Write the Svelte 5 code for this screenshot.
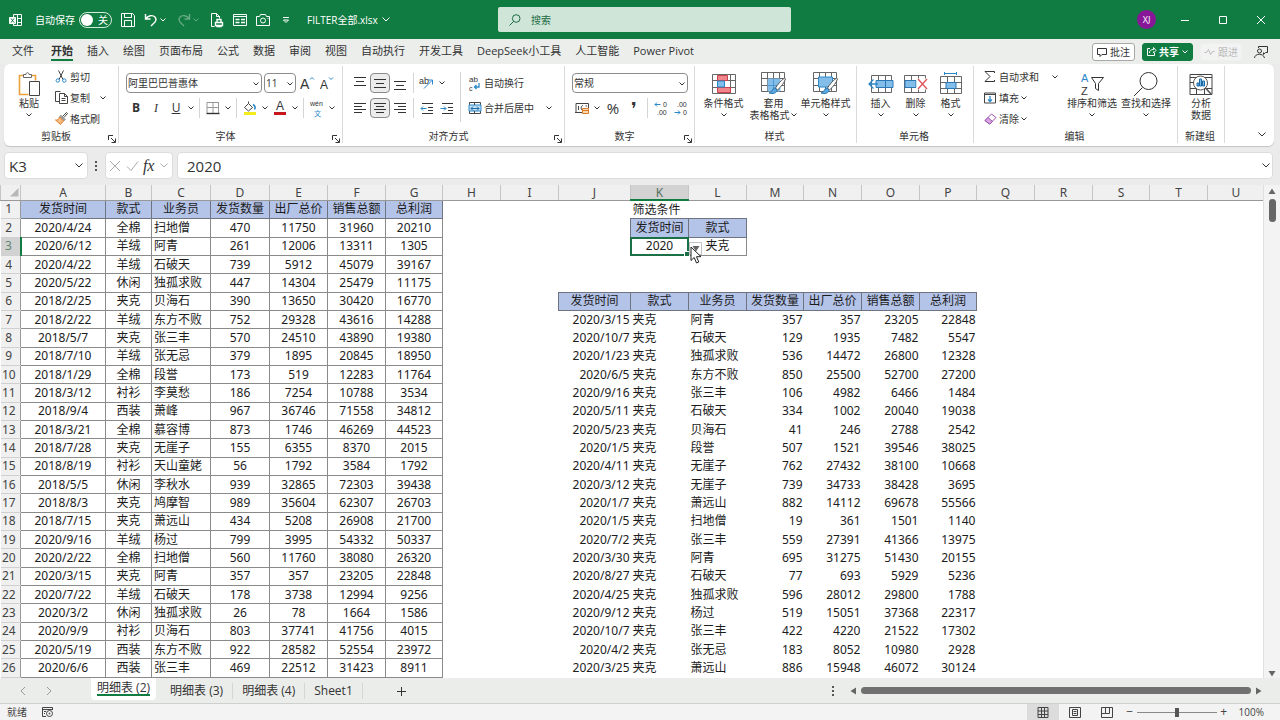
<script lang="ts">
    // part: [path, stroke?, fill?, stroke width?]   text: [x, y, size, string, colour?]
    type Part = [string, string?, string?, number?];
    type Glyph = [number, number, number, string, string?];
    type Icon = { w: number; h: number; p?: Part[]; t?: Glyph[] };

    const BLUE = "#2b88c8";
    const SKY = "#83bdea";
    const INK = "#444";
    const GRID = "M.5 .5h23v19H.5zM.5 6.5h23M.5 13.5h23M6.5 .5v19M12.5 .5v19M18.5 .5v19";

    const icons: Record<string, Icon> = {
        excel: {
            w: 14,
            h: 14,
            p: [
                ["M4.5 4V1.5h8v11h-8V11M8 5.5h4.500M8.5 1.5v11M8 9.500h4.500"],
                ["M.5 4.5h6v6h-6z", "#fff", "#fff"],
                ["M2 5.5l3 4M5 5.5l-3 4", "#107c41"],
            ],
        },
        save: { w: 14, h: 14, p: [["M.5 .5h11l2 2v11H.5zM3.5 .5v4h7v-4M3.5 13.5v-6h7v6"]] },
        undo: { w: 14, h: 14, p: [["M1.5 1v5h5M1.5 6C4 2.500 8.500 1.500 11 4c2 2.500.5 5-1.500 6.500L7 13", "currentColor", "none", 1.4]] },
        redo: { w: 14, h: 14, p: [["M12.500 1v5h-5M12.500 6C10 2.500 5.500 1.500 3 4 1 6.500 2.500 9 4.500 10.500L7 13", "currentColor", "none", 1.4]] },
        print: {
            w: 14,
            h: 14,
            p: [["M4.500 13.500h-3v-13h5l3 3v2M6.500 .5v3h3"], ["M5.500 9.500h7v3h-7zM7 9.500v-3h4v3M7 12.500v1h4v-1", "currentColor", "none", 1.4]],
        },
        form: { w: 14, h: 12, p: [["M.5 .5h13v11H.5zM.5 2.500h13", "currentColor"], ["M2.500 5.500h4M2.500 8.500h4M8 5.500h4M8 8.500h4", "currentColor", "none", 1.6]] },
        camera: { w: 14, h: 12, p: [["M.5 2.500h3l1-2h5l1 2h3v9H.5zM9.500 6.500a2.500 2.500 0 1 1-5 0a2.500 2.500 0 0 1 5 0M11.500 4.500h1"]] },
        more: { w: 8, h: 8, p: [["M1 1.500h6"], ["M1.500 4h5L4 6.500z"]] },
        chev: { w: 8, h: 6, p: [["M1.500 1.500L4 4l2.500-2.500"]] },
        chevBig: { w: 10, h: 7, p: [["M1.500 1.500L5 5l3.500-3.500"]] },
        search: { w: 12, h: 12, p: [["M11 4.500a3.800 3.800 0 1 1-7.600 0a3.800 3.800 0 0 1 7.600 0M4.500 7.500L.5 11.500"]] },
        min: { w: 10, h: 10, p: [["M1 5.500h8"]] },
        max: { w: 10, h: 10, p: [["M1.500 1.500h7v7h-7z"]] },
        close: { w: 10, h: 10, p: [["M1 1l8 8M9 1L1 9"]] },
        comment: { w: 10, h: 10, p: [["M.5 1.500h9v6H5l-2 2v-2H.5z"]] },
        share: { w: 11, h: 11, p: [["M4 2.500H1.500v7h7V7M3.500 7c0-2.500 1.500-3.500 4-3.500V1.500l2.500 3-2.500 2.500V5.500"]] },
        pulse: { w: 11, h: 8, p: [["M.5 4.500h2l2-3 2 5 2-3h2"]] },
        person: { w: 14, h: 14, p: [["M7.500 6a2 2 0 1 1-4 0a2 2 0 0 1 4 0M.5 13c.5-5 9-5 10 0M4.500 3V1.500h9v6h-2l-2 2v-2"]] },

        paste: {
            w: 24,
            h: 25,
            p: [
                ["M6 3.500H2.500v19h9M15 3.500h3.500v5", "#e9a13b", "none", 1.6],
                ["M6.500 5.500v-3h2.500c0-2.500 3-2.500 3 0h2.500v3z", "#666", "#fff"],
                ["M12.500 9.500h10v14h-10z", "#444", "#fff"],
            ],
        },
        cut: {
            w: 12,
            h: 13,
            p: [["M3.500 .5l4.500 9M8.500 .5l-4.500 9", INK], ["M4.500 10.500a1.700 1.700 0 1 1-3.400 0a1.700 1.700 0 0 1 3.400 0M11 10.500a1.700 1.700 0 1 1-3.400 0a1.700 1.700 0 0 1 3.400 0", BLUE]],
        },
        copy: { w: 13, h: 13, p: [["M5 10.500H.5v-10h5", INK], ["M4.500 2.500h5l3 3v7h-8zM9.500 2.500v3h3M6.500 7.500h4M6.500 9.500h4", INK, "#fff"]] },
        brush: {
            w: 13,
            h: 13,
            p: [["M7.500 4.500L11.500 .5l1 1-3.500 4", INK, "#fff"], ["M6 3.500l4 4-1 1-4-4z", INK, "#fff"], ["M4.500 5l4 4-3 3.500L.5 8c2 .5 3-.5 4-3z", "#e07b28", "#f6bd82"]],
        },
        launcher: { w: 8, h: 8, p: [["M.5 5V.5H5M3 3l4 4M7.500 3.500v4h-4"]] },
        growFont: { w: 16, h: 14, p: [["M10 3.500l2-2 2 2", BLUE]], t: [[0, 13, 14, "A"]] },
        shrinkFont: { w: 16, h: 14, p: [["M9 1.500l2 2 2-2", BLUE]], t: [[0, 13, 12, "A"]] },
        borders: { w: 14, h: 14, p: [["M1 1.500h12M1 1v11M12.500 1v11M7 2v10M1 6.500h12", "#999"], ["M.5 12.500h13", "#333", "none", 1.4]] },
        fill: {
            w: 14,
            h: 14,
            p: [["M1.500 6.500l4-4 4 4-4 3.500zM5.500 2.500V.5", INK, "#fff"], ["M10 3.500c2 1 2.500 3 1.500 5", BLUE, "none", 1.6], ["M1 12.500h12", "#f3ec1c", "none", 3]],
        },
        fontColor: { w: 14, h: 14, p: [["M1 12.500h12", "#c5161d", "none", 3]], t: [[3, 9, 12, "A"]] },
        phonetic: { w: 16, h: 15, t: [[1, 5, 7, "wén"], [5, 15, 7, "文", BLUE]] },
        top: { w: 14, h: 14, p: [["M1 1.500h12M3 5.500h8M1 9.500h12"]] },
        middle: { w: 14, h: 14, p: [["M1 3.500h12M3 7.500h8M1 11.500h12"]] },
        bottom: { w: 14, h: 14, p: [["M1 5.500h12M3 9.500h8M1 13.500h12"]] },
        left: { w: 14, h: 14, p: [["M1 2.500h12M1 5.500h8M1 8.500h12M1 11.500h8"]] },
        center: { w: 14, h: 14, p: [["M1 2.500h12M3 5.500h8M1 8.500h12M3 11.500h8"]] },
        right: { w: 14, h: 14, p: [["M1 2.500h12M5 5.500h8M1 8.500h12M5 11.500h8"]] },
        orient: { w: 16, h: 14, p: [["M5 12.500l8-8M9 4h4.500v4.500", BLUE]], t: [[0, 8, 9, "ab"]] },
        outdent: { w: 14, h: 14, p: [["M2 2.500h11M8 6.500h5M8 9.500h5M2 12.500h11"], ["M6.500 7.500H1M3 5.500l-2 2 2 2", BLUE]] },
        indent: { w: 14, h: 14, p: [["M2 2.500h11M8 6.500h5M8 9.500h5M2 12.500h11"], ["M.5 7.500H6M4 5.500l2 2-2 2", BLUE]] },
        wrap: { w: 14, h: 15, p: [["M11 7v4H6.500M8.500 9l-2 2 2 2", BLUE, "none", 1.3]], t: [[1, 6, 8, "ab"], [1, 15, 7, "c"]] },
        merge: { w: 14, h: 14, p: [["M1.500 1.500h11v11h-11z", INK, "#fff"], ["M1 4h12v6H1z", BLUE, "#c6e0f5"], ["M3 7.500h8M5 5.500l-2 2 2 2M9 5.500l2 2-2 2", "#1c6aa5"], ["M6.500 1v3M6.500 10v3", INK]] },
        money: {
            w: 15,
            h: 13,
            p: [["M1 10.500V1.500h12.500V6M3.500 4v4M8 3.500c-2.500 0-2.500 5 0 5M12 4h-1.500", INK], ["M7.500 6.500h6v5h-6zM7.500 8.500h6", "#e07b28", "#f8d9b5"], ["M0 10.500h7", INK]],
        },
        incDec: { w: 14, h: 14, p: [["M6.500 3.500H1M3 1.500l-2 2 2 2", BLUE]], t: [[9, 6, 7, "0"], [3, 14, 7, ".00"]] },
        decDec: { w: 14, h: 14, p: [["M.5 11.500H6M4 9.500l2 2-2 2", BLUE]], t: [[3, 6, 7, ".00"], [9, 14, 7, "0"]] },
        cond: {
            w: 24,
            h: 20,
            p: [[GRID, "#666", "#fff"], ["M5.500 1.500h10v5h-10zM5.500 13.500h13v5h-13z", "#c8414b", "#f0858b"], ["M5.500 7h7v6h-7z", BLUE, SKY]],
        },
        tableStyle: {
            w: 25,
            h: 24,
            p: [[GRID, "#666", "#fff"], ["M7 7h12v12H7z", SKY, SKY], ["M12.500 7v12M7 13.500h12", "#4f97cf"], ["M23.500 6c-4 3-7 6.500-9 10l2 2c4-3.500 6.500-7 8-11z", "#555", "#fff"], ["M14 16c-3 0-2 4-6 5 4 1.500 8 0 8-3z", "#2b78b5", "#5aa5dd"]],
        },
        cellStyle: {
            w: 25,
            h: 24,
            p: [[GRID, "#666", "#fff"], ["M5.500 5h14v10h-14z", BLUE, SKY], ["M23.500 6c-4 3-7 6.500-9 10l2 2c4-3.500 6.500-7 8-11z", "#555", "#fff"], ["M14 16c-3 0-2 4-6 5 4 1.500 8 0 8-3z", "#2b78b5", "#5aa5dd"]],
        },
        insert: {
            w: 26,
            h: 20,
            p: [["M3.500 1.500h20v17h-20zM10.500 1v18M17.500 1v18", "#666", "#fff"], ["M8 6.500h17v7H8z", "#2b78b5", SKY], ["M17.500 6v8", "#2b78b5"], ["M10 10H1.500M5.500 5.500L1 10l4.500 4.500", BLUE, "none", 1.3]],
        },
        remove: {
            w: 25,
            h: 20,
            p: [["M1.500 1.500h21v17h-21zM8.500 1v18M15.500 1v18", "#666", "#fff"], ["M2 6.500h11v7H2z", "#2b78b5", SKY], ["M14 5h9v10h-9z", "#fff", "#fff"], ["M15 5l9 10M24 5l-9 10", "#e2525b", "none", 1.3]],
        },
        format: {
            w: 24,
            h: 24,
            p: [["M1.500 4.500h21v17h-21zM8.500 4v18M15.500 4v18M1.500 10.500h21M1.500 16.500h21", "#666", "#fff"], ["M7 10.500h10v6H7z", "#2b78b5", SKY], ["M5.500 1.500h12M5.500 0v3M17.500 0v3", BLUE]],
        },
        sum: { w: 12, h: 13, p: [["M10.500 3V1.500H1L6 6.500l-5 5h9.500V10"]] },
        fillDown: { w: 14, h: 12, p: [["M1.500 1h11v10h-11zM1.500 2.500h11", INK], ["M7 4v5M5 7.500l2 2 2-2", BLUE, "none", 1.3]] },
        eraser: { w: 13, h: 12, p: [["M1 7.500L7.500 1 12 4.500 5.500 11z", "#9a4fa8", "#fff"], ["M1 7.500L4 4.500l4.500 4-3 2.500z", "#9a4fa8", "#d9a8e2"]] },
        sort: { w: 25, h: 25, p: [["M11.500 5.500h12l-5 6v7l-3-2v-5z"]], t: [[1, 10, 11, "A", BLUE], [1, 23, 11, "Z"]] },
        find: { w: 26, h: 25, p: [["M24 9a8.500 8.500 0 1 1-17 0a8.500 8.500 0 0 1 17 0M9.500 15.500L1 24"]] },
        analyze: {
            w: 24,
            h: 25,
            p: [["M1 2.500h22v20H1zM1 5.500h22M1 16.500h22M7.500 16v6M15.500 16v6M1 10.500h5", INK, "#fff"], ["M18.500 11a7 7 0 1 1-14 0a7 7 0 0 1 14 0", "#555", "#fff"], ["M16.500 16l6 6.500", "#555", "none", 1.6], ["M8 14v-3h2v3zM10.500 14V7h2v7zM13.500 14V9h2v5z", "#1c6aa5", SKY]],
        },

        cross: { w: 12, h: 12, p: [["M1 1l10 10M11 1L1 11"]] },
        check: { w: 13, h: 12, p: [["M1 6.500l4 4 7-9"]] },
        corner: { w: 10, h: 9, p: [["M9.500 0v8.500H1z", "none", "#b8b8b8"]] },
        up: { w: 8, h: 7, p: [["M4 .5L7.500 6h-7z", "none", "#666"]] },
        down: { w: 8, h: 7, p: [["M4 6.500L7.500 1h-7z", "none", "#666"]] },
        prev: { w: 7, h: 8, p: [["M.5 4L6 .5v7z", "none", "#666"]] },
        next: { w: 7, h: 8, p: [["M6.500 4L1 .5v7z", "none", "#666"]] },
        navPrev: { w: 6, h: 10, p: [["M5 1L1 5l4 4"]] },
        navNext: { w: 6, h: 10, p: [["M1 1l4 4-4 4"]] },
        plus: { w: 10, h: 10, p: [["M5.500 1v9M1 5.500h9"]] },
        macro: { w: 13, h: 12, p: [["M5 10.500H1.500v-9h10V4M1.500 3.500h10M3 5.500h2M3 7.500h1"], ["M11.500 7.500a3 3 0 1 1-6 0a3 3 0 0 1 6 0M9 7.500a.5.5 0 1 1-1 0a.5.5 0 0 1 1 0"]] },
        viewNormal: { w: 12, h: 11, p: [["M1 .5h10v10H1zM1 4h10M1 7.500h10M4.500 .5v10M7.500 .5v10"]] },
        viewPage: { w: 12, h: 11, p: [["M.5 .5h11v10H.5zM3.500 2.500h5v6h-5zM4.500 4.500h3M4.500 6.500h3"]] },
        viewBreak: { w: 12, h: 11, p: [["M.5 .5h11v10H.5zM4.500 .5v6h-4M8.500 .5v6h-4"]] },
        pointer: { w: 12, h: 19, p: [["M1 1v13.500l3.200-3 2.300 5.500 2.300-1-2.300-5.300H11z", "#222", "#fff"]] },
    };

    const menus = ["文件", "开始", "插入", "绘图", "页面布局", "公式", "数据", "审阅", "视图", "自动执行", "开发工具", "DeepSeek小工具", "人工智能", "Power Pivot"];
    const columns = "ABCDEFGHIJKLMNOPQRSTU".split("");
    const headings = ["发货时间", "款式", "业务员", "发货数量", "出厂总价", "销售总额", "总利润"];

    const source = `2020/4/24 全棉 扫地僧 470 11750 31960 20210
2020/6/12 羊绒 阿青 261 12006 13311 1305
2020/4/22 羊绒 石破天 739 5912 45079 39167
2020/5/22 休闲 独孤求败 447 14304 25479 11175
2018/2/25 夹克 贝海石 390 13650 30420 16770
2018/2/22 羊绒 东方不败 752 29328 43616 14288
2018/5/7 夹克 张三丰 570 24510 43890 19380
2018/7/10 羊绒 张无忌 379 1895 20845 18950
2018/1/29 全棉 段誉 173 519 12283 11764
2018/3/12 衬衫 李莫愁 186 7254 10788 3534
2018/9/4 西装 萧峰 967 36746 71558 34812
2018/3/21 全棉 慕容博 873 1746 46269 44523
2018/7/28 夹克 无崖子 155 6355 8370 2015
2018/8/19 衬衫 天山童姥 56 1792 3584 1792
2018/5/5 休闲 李秋水 939 32865 72303 39438
2018/8/3 夹克 鸠摩智 989 35604 62307 26703
2018/7/15 夹克 萧远山 434 5208 26908 21700
2020/9/16 羊绒 杨过 799 3995 54332 50337
2020/2/22 全棉 扫地僧 560 11760 38080 26320
2020/3/15 夹克 阿青 357 357 23205 22848
2020/7/22 羊绒 石破天 178 3738 12994 9256
2020/3/2 休闲 独孤求败 26 78 1664 1586
2020/9/9 衬衫 贝海石 803 37741 41756 4015
2020/5/19 西装 东方不败 922 28582 52554 23972
2020/6/6 西装 张三丰 469 22512 31423 8911`.split("\n").map((line) => line.split(" "));

    const result = `2020/3/15 夹克 阿青 357 357 23205 22848
2020/10/7 夹克 石破天 129 1935 7482 5547
2020/1/23 夹克 独孤求败 536 14472 26800 12328
2020/6/5 夹克 东方不败 850 25500 52700 27200
2020/9/16 夹克 张三丰 106 4982 6466 1484
2020/5/11 夹克 石破天 334 1002 20040 19038
2020/5/23 夹克 贝海石 41 246 2788 2542
2020/1/5 夹克 段誉 507 1521 39546 38025
2020/4/11 夹克 无崖子 762 27432 38100 10668
2020/3/12 夹克 无崖子 739 34733 38428 3695
2020/1/7 夹克 萧远山 882 14112 69678 55566
2020/1/5 夹克 扫地僧 19 361 1501 1140
2020/7/2 夹克 张三丰 559 27391 41366 13975
2020/3/30 夹克 阿青 695 31275 51430 20155
2020/8/27 夹克 石破天 77 693 5929 5236
2020/4/25 夹克 独孤求败 596 28012 29800 1788
2020/9/12 夹克 杨过 519 15051 37368 22317
2020/10/7 夹克 张三丰 422 4220 21522 17302
2020/4/2 夹克 张无忌 183 8052 10980 2928
2020/3/25 夹克 萧远山 886 15948 46072 30124`.split("\n").map((line) => line.split(" "));

    type Cell = { v: string; c: string };

    function cellAt(row: number, col: number): Cell {
        if (col < 7) {
            if (row === 1) return { v: headings[col], c: "head" };
            return { v: source[row - 2][col], c: col === 2 ? "box start" : "box" };
        }
        if (col === 10 && row === 1) return { v: "筛选条件", c: "start" };
        if ((col === 10 || col === 11) && row === 2) return { v: headings[col - 10], c: "head" };
        if (col === 10 && row === 3) return { v: "2020", c: "box active" };
        if (col === 11 && row === 3) return { v: "夹克", c: "box" };
        if (col >= 9 && col <= 15) {
            if (row === 6) return { v: headings[col - 9], c: "head" };
            if (row > 6) return { v: result[row - 7][col - 9], c: col === 10 || col === 11 ? "start" : "end" };
        }
        return { v: "", c: "" };
    }

    const rows = Array.from({ length: 26 }, (_, r) => columns.map((_, c) => cellAt(r + 1, c)));

    let menu = $state("开始");
    let sheet = $state("明细表 (2)");
    let autosave = $state(false);
    let zoom = $state(100);
    let formula = $state("2020");
    let cellName = $state("K3");
</script>

{#snippet icon(name: string)}
    {@const i = icons[name]}
    <svg width={i.w} height={i.h} viewBox="0 0 {i.w} {i.h}" aria-hidden="true">
        {#each i.p ?? [] as [d, stroke, fill, width]}
            <path {d} stroke={stroke ?? "currentColor"} fill={fill ?? "none"} stroke-width={width ?? 1} />
        {/each}
        {#each i.t ?? [] as [x, y, size, text, color]}
            <text {x} {y} font-size={size} fill={color ?? "currentColor"}>{text}</text>
        {/each}
    </svg>
{/snippet}

{#snippet tool(name: string, label: string, on = false)}
    <button class="tool" class:on aria-label={label}>{@render icon(name)}</button>
{/snippet}

{#snippet drop(label: string)}
    <button class="drop" aria-label={label}>{@render icon("chev")}</button>
{/snippet}

{#snippet line(name: string, label: string)}
    <button class="line"><span class="pic">{@render icon(name)}</span>{label}</button>
{/snippet}

{#snippet big(name: string, first: string, second = "", arrow = true)}
    <button class="big">
        <span class="art">{@render icon(name)}</span>
        <span>{first}</span>
        <span class="second">{second}{#if arrow}{@render icon("chev")}{/if}</span>
    </button>
{/snippet}

{#snippet caption(label: string, launcher = true)}
    <div class="caption">
        <span>{label}</span>
        {#if launcher}<button aria-label="{label}设置">{@render icon("launcher")}</button>{/if}
    </div>
{/snippet}

<div class="window">
    <header class="title">
        <div class="quick">
            <span class="logo">{@render icon("excel")}</span>
            <label for="autosave">自动保存</label>
            <span class="switch">
                <input id="autosave" type="checkbox" role="switch" bind:checked={autosave} />
                <span>{autosave ? "开" : "关"}</span>
            </span>
            <button aria-label="保存">{@render icon("save")}</button>
            <span class="pair">
                <button aria-label="撤消">{@render icon("undo")}</button>
                {@render drop("撤消列表")}
            </span>
            <span class="pair dim">
                <button aria-label="恢复" disabled>{@render icon("redo")}</button>
                {@render drop("恢复列表")}
            </span>
            <button aria-label="打印预览">{@render icon("print")}</button>
            <button aria-label="记录单">{@render icon("form")}</button>
            <button aria-label="照相机">{@render icon("camera")}</button>
            <button class="more" aria-label="自定义快速访问工具栏">{@render icon("more")}</button>
            <button class="file">FILTER全部.xlsx {@render icon("chevBig")}</button>
        </div>
        <label class="search">
            {@render icon("search")}
            <input type="search" placeholder="搜索" aria-label="搜索" />
        </label>
        <div class="controls">
            <button class="avatar">XJ</button>
            <button aria-label="最小化">{@render icon("min")}</button>
            <button aria-label="最大化">{@render icon("max")}</button>
            <button aria-label="关闭">{@render icon("close")}</button>
        </div>
    </header>

    <nav class="menus">
        {#each menus as m}
            <button class="menu" class:current={menu === m} onclick={() => (menu = m)}><span>{m}</span></button>
        {/each}
        <div class="actions">
            <button class="pill">{@render icon("comment")}批注</button>
            <button class="pill share">{@render icon("share")}共享{@render icon("chev")}</button>
            <button class="pill off" disabled>{@render icon("pulse")}跟进</button>
            <button class="people" aria-label="联系人">{@render icon("person")}</button>
        </div>
    </nav>

    <section class="ribbon">
        <div class="group clipboard">
            <div class="body">
                {@render big("paste", "粘贴")}
                <div class="stack">
                    {@render line("cut", "剪切")}
                    <div class="pair">{@render line("copy", "复制")}{@render drop("复制选项")}</div>
                    {@render line("brush", "格式刷")}
                </div>
            </div>
            {@render caption("剪贴板")}
        </div>

        <div class="group font">
            <div class="body lines">
                <div class="row">
                    <span class="select family">
                        <select aria-label="字体"><option>阿里巴巴普惠体</option></select>
                        {@render icon("chev")}
                    </span>
                    <span class="select size">
                        <select aria-label="字号"><option>11</option></select>
                        {@render icon("chev")}
                    </span>
                    {@render tool("growFont", "增大字号")}
                    {@render tool("shrinkFont", "减小字号")}
                </div>
                <div class="row">
                    <button class="tool"><b>B</b></button>
                    <button class="tool"><i>I</i></button>
                    <button class="tool"><u>U</u></button>
                    {@render drop("下划线")}
                    <span class="rule"></span>
                    {@render tool("borders", "边框")}
                    {@render drop("边框选项")}
                    <span class="rule"></span>
                    {@render tool("fill", "填充颜色")}
                    {@render drop("填充颜色选项")}
                    {@render tool("fontColor", "字体颜色")}
                    {@render drop("字体颜色选项")}
                    <span class="rule"></span>
                    {@render tool("phonetic", "拼音")}
                    {@render drop("拼音选项")}
                </div>
            </div>
            {@render caption("字体")}
        </div>

        <div class="group align">
            <div class="body">
                <div class="lines">
                    <div class="row">
                        {@render tool("top", "顶端对齐")}
                        {@render tool("middle", "垂直居中", true)}
                        {@render tool("bottom", "底端对齐")}
                        <span class="rule"></span>
                        {@render tool("orient", "方向")}
                        {@render drop("方向选项")}
                    </div>
                    <div class="row">
                        {@render tool("left", "左对齐")}
                        {@render tool("center", "居中", true)}
                        {@render tool("right", "右对齐")}
                        <span class="rule"></span>
                        {@render tool("outdent", "减少缩进量")}
                        {@render tool("indent", "增加缩进量")}
                    </div>
                </div>
                <span class="rule tall"></span>
                <div class="lines">
                    <div class="row">{@render line("wrap", "自动换行")}</div>
                    <div class="row wide">{@render line("merge", "合并后居中")}{@render drop("合并选项")}</div>
                </div>
            </div>
            {@render caption("对齐方式")}
        </div>

        <div class="group number">
            <div class="body lines">
                <div class="row">
                    <span class="select general">
                        <select aria-label="数字格式"><option>常规</option></select>
                        {@render icon("chev")}
                    </span>
                </div>
                <div class="row">
                    {@render tool("money", "会计数字格式")}
                    {@render drop("会计数字格式选项")}
                    <button class="tool percent">%</button>
                    <button class="tool comma">❜</button>
                    <span class="rule"></span>
                    {@render tool("incDec", "增加小数位数")}
                    {@render tool("decDec", "减少小数位数")}
                </div>
            </div>
            {@render caption("数字")}
        </div>

        <div class="group styles">
            <div class="body">
                {@render big("cond", "条件格式")}
                {@render big("tableStyle", "套用", "表格格式")}
                {@render big("cellStyle", "单元格样式")}
            </div>
            {@render caption("样式", false)}
        </div>

        <div class="group cells">
            <div class="body">
                {@render big("insert", "插入")}
                {@render big("remove", "删除")}
                {@render big("format", "格式")}
            </div>
            {@render caption("单元格", false)}
        </div>

        <div class="group editing">
            <div class="body">
                <div class="stack">
                    <div class="pair">{@render line("sum", "自动求和")}{@render drop("求和选项")}</div>
                    <div class="near">{@render line("fillDown", "填充")}{@render drop("填充选项")}</div>
                    <div class="near">{@render line("eraser", "清除")}{@render drop("清除选项")}</div>
                </div>
                {@render big("sort", "排序和筛选")}
                {@render big("find", "查找和选择")}
            </div>
            {@render caption("编辑", false)}
        </div>

        <div class="group extra">
            <div class="body">{@render big("analyze", "分析", "数据", false)}</div>
            {@render caption("新建组", false)}
        </div>

        <button class="collapse" aria-label="折叠功能区">{@render icon("chevBig")}</button>
    </section>

    <div class="formula">
        <div class="field name">
            <input aria-label="名称框" bind:value={cellName} />
            <button aria-label="名称列表">{@render icon("chevBig")}</button>
        </div>
        <span class="dots"></span>
        <div class="field fx">
            <button disabled aria-label="取消">{@render icon("cross")}</button>
            <button disabled aria-label="输入">{@render icon("check")}</button>
            <button class="fn"><i>fx</i></button>
            <button disabled aria-label="函数列表">{@render icon("chevBig")}</button>
        </div>
        <div class="field text">
            <input aria-label="编辑栏" bind:value={formula} />
            <button aria-label="展开编辑栏">{@render icon("chevBig")}</button>
        </div>
    </div>

    <main class="sheet">
        <div class="cells-area">
            <table>
                <colgroup>
                    <col class="w-num" />
                    {#each columns as c}
                        <col class="w w-{c}" />
                    {/each}
                </colgroup>
                <thead>
                    <tr>
                        <th class="all">{@render icon("corner")}</th>
                        {#each columns as c}
                            <th class:picked={c === "K"}>{c}</th>
                        {/each}
                    </tr>
                </thead>
                <tbody>
                    {#each rows as cells, r}
                        <tr>
                            <th class:picked={r === 2}>{r + 1}</th>
                            {#each cells as cell}
                                <td class={cell.c}>
                                    {cell.v}
                                    {#if cell.c === "box active"}
                                        <button class="list" aria-label="下拉列表">{@render icon("down")}</button>
                                        <span class="pointer">{@render icon("pointer")}</span>
                                    {/if}
                                </td>
                            {/each}
                        </tr>
                    {/each}
                </tbody>
            </table>
        </div>
        <div class="vscroll">
            <button aria-label="向上">{@render icon("up")}</button>
            <div class="thumb"></div>
            <button class="last" aria-label="向下">{@render icon("down")}</button>
        </div>
    </main>

    <div class="tabs">
        <div class="nav">
            <button aria-label="上一张">{@render icon("navPrev")}</button>
            <button aria-label="下一张">{@render icon("navNext")}</button>
        </div>
        {#each ["明细表 (2)", "明细表 (3)", "明细表 (4)", "Sheet1"] as name}
            <button class="tab" class:current={sheet === name} onclick={() => (sheet = name)}><span>{name}</span></button>
        {/each}
        <button class="add" aria-label="新工作表">{@render icon("plus")}</button>
        <div class="hscroll">
            <span class="dots"></span>
            <button aria-label="向左">{@render icon("prev")}</button>
            <div class="thumb"></div>
            <button aria-label="向右">{@render icon("next")}</button>
        </div>
    </div>

    <footer class="status">
        <span>就绪</span>
        <button aria-label="录制宏">{@render icon("macro")}</button>
        <div class="views">
            <button class="view on" aria-label="普通">{@render icon("viewNormal")}</button>
            <button class="view" aria-label="页面布局">{@render icon("viewPage")}</button>
            <button class="view" aria-label="分页预览">{@render icon("viewBreak")}</button>
            <button class="step" onclick={() => (zoom -= 10)}>−</button>
            <input type="range" min="0" max="200" aria-label="缩放" bind:value={zoom} />
            <button class="step" onclick={() => (zoom += 10)}>+</button>
            <output>{zoom}%</output>
        </div>
    </footer>
</div>

<style>
    :global(body) {
        margin: 0;
    }
    .window {
        height: 100vh;
        display: flex;
        flex-direction: column;
        overflow: hidden;
        background: #ebebeb;
        color: #333;
        font: 10px/12px "Open Sans", "Noto Sans CJK SC", sans-serif;
    }
    button,
    input,
    select {
        font: inherit;
        color: inherit;
        background: none;
        border: 0;
        padding: 0;
        margin: 0;
        outline: 0;
    }
    button {
        display: flex;
        align-items: center;
        justify-content: center;
        white-space: nowrap;
    }
    svg {
        display: block;
        flex: none;
        overflow: visible;
    }
    svg text {
        font-family: "Liberation Sans", "Noto Sans CJK SC", sans-serif;
    }

    /* title bar */
    .title {
        flex: none;
        height: 39px;
        padding-left: 9px;
        display: grid;
        grid-template-columns: 1fr 293px 1fr;
        align-items: center;
        background: #107c41;
        color: #fff;
    }
    .quick {
        display: flex;
        align-items: center;
        gap: 9px;
    }
    .quick > label {
        margin: 0 -5px 0 3px;
    }
    .pair {
        display: flex;
        align-items: center;
    }
    .dim {
        opacity: 0.35;
    }
    .switch {
        position: relative;
        display: flex;
    }
    .switch input {
        appearance: none;
        width: 33px;
        height: 16px;
        border: 1px solid #d5eadd;
        border-radius: 8px;
    }
    .switch input::before {
        content: "";
        display: block;
        width: 12px;
        height: 12px;
        margin: 1px;
        border-radius: 50%;
        background: #fff;
    }
    .switch input:checked::before {
        margin-left: 18px;
    }
    .switch span {
        position: absolute;
        left: 19px;
        top: 2px;
        pointer-events: none;
    }
    .switch input:checked + span {
        left: 4px;
    }
    .quick .more {
        margin: 0 8px 0 3px;
    }
    .file {
        gap: 3px;
    }
    .search {
        height: 25px;
        display: flex;
        align-items: center;
        gap: 10px;
        padding-left: 11px;
        border-radius: 2px;
        background: #cfe5d8;
        color: #1c6b42;
    }
    .search input {
        flex: 1;
        min-width: 0;
    }
    .search input::placeholder {
        color: #1c6b42;
        opacity: 1;
    }
    .title .controls {
        display: flex;
        justify-content: flex-end;
        align-items: center;
    }
    .controls button {
        width: 38px;
        height: 24px;
    }
    .controls .avatar {
        width: 19px;
        height: 19px;
        margin-right: 10px;
        border-radius: 50%;
        background: #881798;
        font-size: 9px;
    }

    /* menu strip */
    .menus {
        flex: none;
        height: 25px;
        padding-left: 5px;
        display: flex;
        align-items: center;
        background: #ebeeeb;
    }
    .menu {
        height: 25px;
        padding: 0 7px;
        font-size: 11px;
    }
    .menu:first-child {
        margin-right: 3px;
    }
    .menu span {
        padding: 3px 0 2px;
        border-bottom: 2px solid transparent;
    }
    .menu.current span {
        font-weight: 700;
        border-color: #107c41;
    }
    .actions {
        margin-left: auto;
        display: flex;
        align-items: center;
        gap: 7px;
        padding-right: 12px;
    }
    .pill {
        height: 18px;
        padding: 0 4px;
        gap: 3px;
        background: #fff;
        border: 1px solid #a8a8a8;
        border-radius: 3px;
    }
    .pill.share {
        padding: 0 3px;
        gap: 2px;
        background: #107c41;
        border-color: #107c41;
        color: #fff;
        font-weight: 700;
    }
    .pill.off {
        padding: 0 3px;
        background: #f3f3f3;
        border-color: #efefef;
        color: #bbb;
    }
    .people {
        margin-left: 5px;
    }

    /* ribbon */
    .ribbon {
        flex: none;
        margin: 0 6px 0 4px;
        padding: 2px 0 3px;
        display: flex;
        background: #fff;
        border-radius: 6px;
        box-shadow: 0 1px 1px #c4c4c4;
    }
    .group {
        flex: none;
        box-sizing: border-box;
        display: flex;
        flex-direction: column;
        border-right: 1px solid #dadada;
    }
    .clipboard {
        width: 115px;
    }
    .font {
        width: 224px;
    }
    .align {
        width: 222px;
    }
    .number {
        width: 130px;
    }
    .styles {
        width: 162px;
    }
    .cells {
        width: 117px;
    }
    .editing {
        width: 204px;
    }
    .extra {
        width: 47px;
    }
    .body {
        height: 63px;
        display: flex;
    }
    .font .body,
    .align .body,
    .number .body {
        padding-left: 7px;
    }
    .styles .body,
    .extra .body {
        justify-content: center;
    }
    .cells .body {
        padding-left: 6px;
    }
    .editing .body {
        padding-left: 9px;
    }
    .lines {
        display: flex;
        flex-direction: column;
        gap: 1px;
        padding-top: 5px;
    }
    .body.lines {
        box-sizing: border-box;
    }
    .row {
        height: 24px;
        display: flex;
        align-items: center;
    }
    .wide {
        width: 90px;
        justify-content: space-between;
    }
    .stack {
        display: grid;
        grid-template-rows: repeat(3, 21px);
        align-items: center;
    }
    .clipboard .stack {
        width: 54px;
    }
    .editing .stack {
        width: 77px;
        margin-right: 5px;
    }
    .stack .pair {
        justify-content: space-between;
    }
    .near {
        display: flex;
        align-items: center;
    }
    .line {
        gap: 2px;
        justify-content: flex-start;
    }
    .pic {
        width: 14px;
        display: flex;
        justify-content: center;
    }
    .align .line {
        padding-left: 4px;
    }
    .big {
        flex-direction: column;
        justify-content: flex-start;
        padding-top: 5px;
        width: 50px;
    }
    .editing .big,
    .styles .big:last-child {
        width: 54px;
    }
    .cells .big {
        width: 35px;
    }
    .art {
        height: 26px;
        display: flex;
        align-items: center;
    }
    .second {
        height: 12px;
        display: flex;
        align-items: center;
    }
    .tool {
        box-sizing: border-box;
        width: 20px;
        height: 20px;
        font-size: 12px;
    }
    .tool.on {
        background: #ececec;
        border: 1px solid #8a8a8a;
        border-radius: 4px;
    }
    .tool i {
        font-family: "Liberation Serif", serif;
    }
    .percent {
        width: 22px;
        font-size: 15px;
    }
    .comma {
        font-size: 18px;
    }
    .drop {
        width: 10px;
        height: 14px;
    }
    .rule {
        width: 1px;
        height: 20px;
        margin: 0 3px;
        background: #d5d5d5;
    }
    .rule.tall {
        height: 50px;
        margin-top: 6px;
    }
    .select {
        position: relative;
        display: flex;
        margin-right: 2px;
    }
    .select select {
        appearance: none;
        box-sizing: border-box;
        width: 100%;
        height: 20px;
        padding-left: 1px;
        border: 1px solid #8d8d8d;
        border-radius: 4px;
    }
    .select > :global(svg) {
        position: absolute;
        right: 2px;
        top: 8px;
        pointer-events: none;
    }
    .family {
        width: 136px;
    }
    .size {
        width: 32px;
    }
    .general {
        width: 116px;
    }
    .caption {
        height: 14px;
        display: flex;
        align-items: center;
        padding-right: 2px;
    }
    .caption span {
        flex: 1;
        text-align: center;
    }
    .caption button {
        align-self: flex-end;
    }
    .collapse {
        margin: auto 7px 5px auto;
    }

    /* formula bar */
    .formula {
        flex: none;
        height: 39px;
        padding: 0 7px 0 4px;
        display: flex;
        align-items: center;
        color: #333;
    }
    .field {
        box-sizing: border-box;
        height: 27px;
        display: flex;
        align-items: center;
        background: #fff;
        border: 1px solid #dcdcdc;
        border-radius: 4px;
    }
    .field input {
        flex: 1;
        min-width: 0;
        font-size: 15px;
        line-height: 20px;
    }
    .name {
        width: 84px;
        padding: 0 3px 0 4px;
    }
    .dots {
        width: 2px;
        height: 10px;
        margin: 0 8px 0 7px;
        background: repeating-linear-gradient(#555 0 2px, transparent 2px 4px);
    }
    .fx {
        width: 68px;
        justify-content: space-around;
        padding: 0 1px;
        margin-right: 4px;
    }
    .fx button:disabled {
        color: #aaa;
    }
    .fn {
        font: 16px "Liberation Serif", serif;
    }
    .text {
        flex: 1;
        padding: 0 1px 0 9px;
    }

    /* grid */
    .sheet {
        flex: 1;
        min-height: 0;
        display: flex;
    }
    .cells-area {
        flex: 1;
        min-width: 0;
        overflow: hidden;
        background: linear-gradient(#f0f0f0 15px, #fff 15px);
    }
    table {
        height: 100%;
        width: 1264px;
        table-layout: fixed;
        border-collapse: collapse;
        background: #fff;
        font: 12px/14px "Noto Sans", "Noto Sans CJK SC", sans-serif;
        color: #1c1c1c;
    }
    .w-num {
        width: 20px;
    }
    .w {
        width: 58px;
    }
    .w-A {
        width: 85px;
    }
    .w-B {
        width: 46px;
    }
    .w-C,
    .w-D {
        width: 59px;
    }
    .w-J {
        width: 72px;
    }
    .w-G,
    .w-M,
    .w-P,
    .w-S,
    .w-U {
        width: 57px;
    }
    th,
    td {
        padding: 0;
        text-align: center;
        white-space: nowrap;
        font-weight: 400;
    }
    thead th {
        height: 14px;
        line-height: 13px;
        background: #f0f0f0;
        border: 1px solid #c6c6c6;
        border-width: 0 1px 1px;
        border-bottom-color: #999;
        color: #444;
    }
    thead .picked {
        background: #d2d2d2;
        color: #55705f;
        border-bottom: 2px solid #107c41;
    }
    .all :global(svg) {
        margin-left: 8px;
    }
    tbody th {
        padding-right: 3px;
        background: #f0f0f0;
        border: 1px solid #d0d0d0;
        border-left: 0;
        border-right-color: #999;
        color: #444;
    }
    tbody .picked {
        background: #d2d2d2;
        color: #5f8570;
        border-right: 2px solid #107c41;
    }
    .box {
        border: 1px solid #8a8a8a;
    }
    .head {
        border: 1px solid #6f7480;
        background: #b4c3e8;
    }
    .start {
        text-align: left;
        padding-left: 2px;
    }
    .end {
        text-align: right;
        padding-right: 1px;
    }
    .active {
        position: relative;
    }
    .active::before {
        content: "";
        position: absolute;
        inset: -1px;
        border: 2px solid #1b7145;
    }
    .active::after {
        content: "";
        position: absolute;
        right: -2px;
        bottom: -2px;
        width: 4px;
        height: 4px;
        background: #1b7145;
        border: 1px solid #fff;
    }
    .list {
        position: absolute;
        left: 100%;
        top: 4px;
        width: 13px;
        height: 13px;
        margin-left: 1px;
        background: #fff;
        border: 1px solid #c4c4c4;
        z-index: 1;
    }
    .pointer {
        position: absolute;
        left: 100%;
        top: 8px;
        margin-left: 2px;
        z-index: 2;
    }

    .vscroll {
        width: 16px;
        display: flex;
        flex-direction: column;
        align-items: center;
        gap: 4px;
        padding: 3px 0 1px;
        background: #f3f3f3;
        border-left: 1px solid #e0e0e0;
    }
    .vscroll .thumb {
        width: 7px;
        height: 23px;
        border-radius: 4px;
        background: #666;
    }
    .last {
        margin-top: auto;
    }

    /* sheet tabs */
    .tabs {
        flex: none;
        height: 25px;
        display: flex;
        align-items: center;
        background: #ebedeb;
        font-size: 12px;
    }
    .nav {
        width: 91px;
        display: flex;
        gap: 20px;
        padding-left: 20px;
        box-sizing: border-box;
        color: #999;
    }
    .tab {
        height: 16px;
        padding: 0 9px;
        border-right: 1px solid #d4d8d4;
    }
    .tab.current {
        height: 22px;
        align-self: flex-start;
        padding: 0 6px;
        margin-right: 5px;
        background: #fff;
        border: 0;
        border-radius: 0 0 4px 4px;
    }
    .tab.current span {
        border-bottom: 2px solid #107c41;
    }
    .add {
        margin-left: 33px;
    }
    .hscroll {
        width: 434px;
        margin-left: auto;
        padding-right: 18px;
        display: flex;
        align-items: center;
        gap: 4px;
    }
    .hscroll .dots {
        margin: 0 12px 0 4px;
    }
    .hscroll .thumb {
        flex: 1;
        height: 7px;
        border-radius: 4px;
        background: #707070;
    }

    /* status bar */
    .status {
        flex: none;
        box-sizing: border-box;
        height: 17px;
        padding-left: 7px;
        display: flex;
        align-items: center;
        gap: 14px;
        background: #f3f3f3;
        border-top: 1px solid #d0d0d0;
        color: #444;
    }
    .views {
        margin-left: auto;
        padding-right: 16px;
        display: flex;
        align-items: center;
    }
    .view {
        width: 32px;
        height: 16px;
    }
    .view.on {
        background: #dcdcdc;
    }
    .step {
        width: 14px;
        font-size: 12px;
    }
    .views input {
        appearance: none;
        width: 80px;
        height: 9px;
        background: linear-gradient(#888, #888) center / 100% 1px no-repeat;
    }
    .views input::-webkit-slider-thumb {
        appearance: none;
        width: 4px;
        height: 9px;
        background: #555;
    }
    .views output {
        margin-left: 8px;
    }
</style>
